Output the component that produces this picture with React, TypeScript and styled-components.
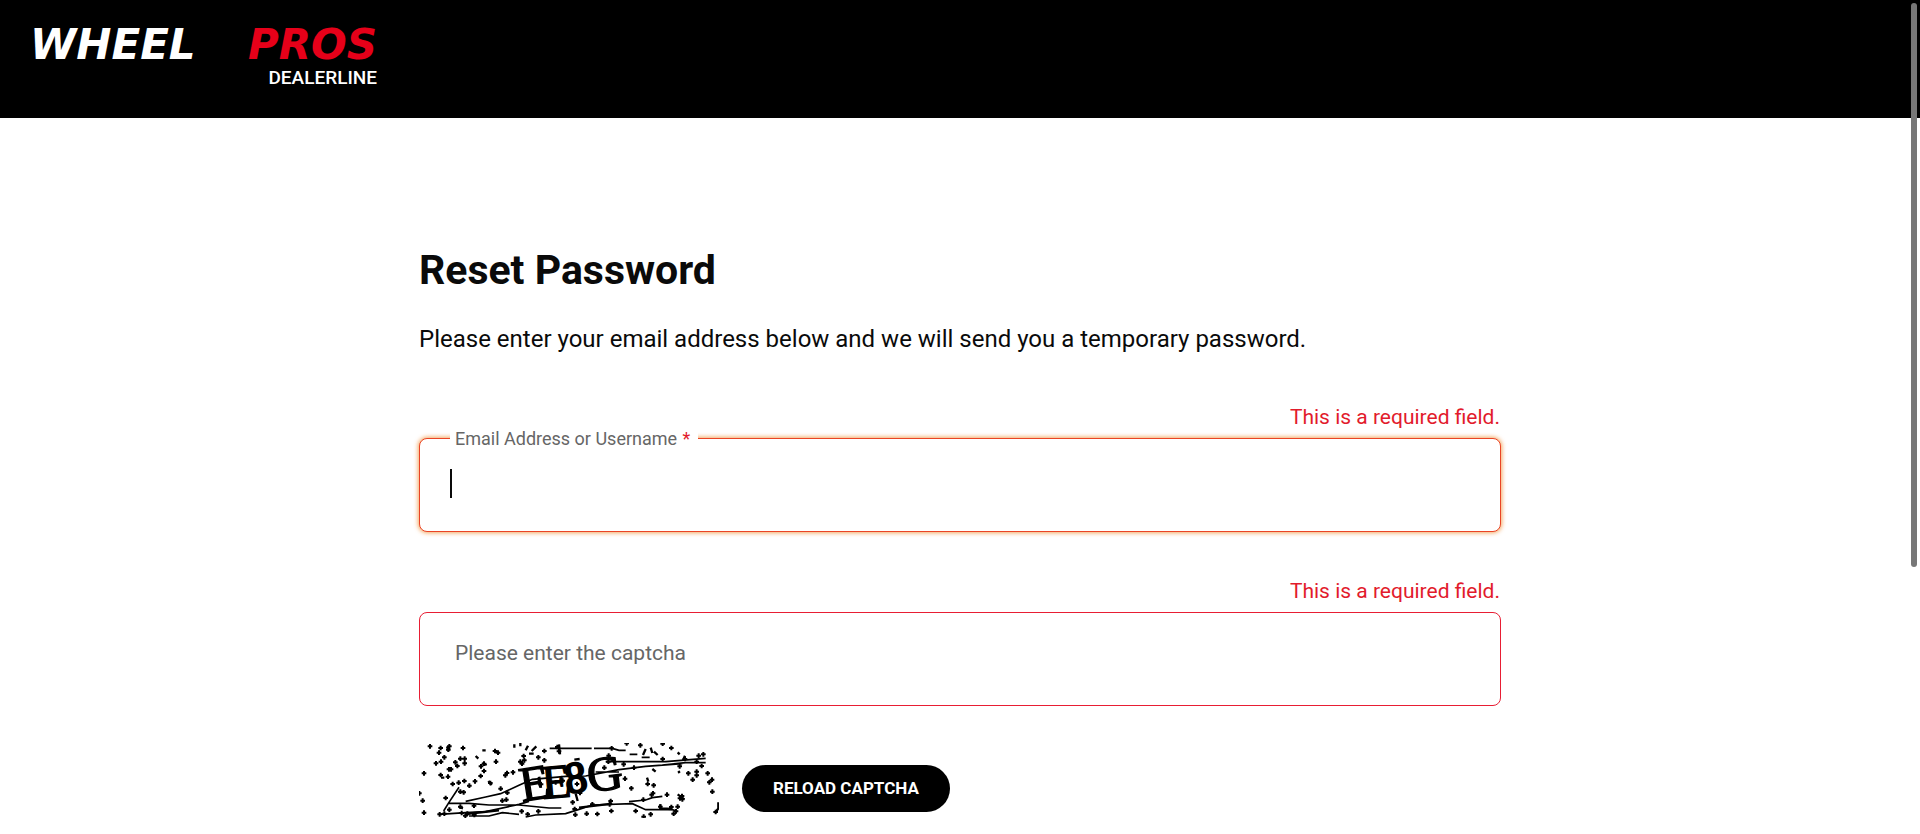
import React from "react";
import styled, { createGlobalStyle } from "styled-components";

const GlobalStyle = createGlobalStyle`
  *, *::before, *::after { box-sizing: border-box; }
  body {
    margin: 0;
    background: #fff;
    color: #0a0a0a;
    font-family: Roboto, "Liberation Sans", sans-serif;
  }
`;

const Header = styled.header`
  display: flex;
  background: #000;
  padding: 29px 30px 28px;
`;

const LogoLink = styled.a`
  display: flex;
  flex-direction: column;
  align-items: flex-end;
  gap: 5px;
  width: 347px;
  color: #fff;
  text-decoration: none;
`;

const Wordmark = styled.span`
  display: flex;
  justify-content: space-between;
  align-self: stretch;
  font: italic 700 42px/32px "DejaVu Sans", sans-serif;
`;

const WordmarkAccent = styled.span`
  color: #e60019;
`;

const Tagline = styled.span`
  font-size: 19px;
  font-weight: 500;
  line-height: 24px;
`;

const Main = styled.main`
  max-width: 1082px;
  margin: 0 auto;
  padding-top: 128px;
`;

const Title = styled.h1`
  margin: 0;
  font-size: 41px;
  font-weight: 700;
  line-height: 48px;
`;

const Intro = styled.p`
  margin: 29px 0 50px;
  font-size: 24px;
  line-height: 32px;
`;

const Form = styled.form`
  display: flex;
  flex-direction: column;
  gap: 47px;
`;

const Field = styled.div`
  display: flex;
  flex-direction: column;
  gap: 9px;
`;

const FieldError = styled.div`
  padding-right: 1px;
  color: #e21b2c;
  font-size: 21px;
  line-height: 24px;
  text-align: right;
`;

const Control = styled.div`
  position: relative;
  display: flex;
`;

const TextInput = styled.input<{ $active?: boolean }>`
  width: 100%;
  height: 94px;
  padding: 0 30px;
  border: 1px solid ${(p) => (p.$active ? "#ea4425" : "#e81e34")};
  border-radius: 8px;
  outline: none;
  background: #fff;
  box-shadow: ${(p) => (p.$active ? "0 0 4px 1px rgba(240, 130, 30, 0.7)" : "none")};
  color: inherit;
  font: 400 21px/24px Roboto, sans-serif;
  caret-color: transparent;
`;

const Label = styled.label<{ $floating?: boolean }>`
  position: absolute;
  left: 31px;
  top: ${(p) => (p.$floating ? "-11px" : "29px")};
  padding: 0 5px;
  background: #fff;
  color: #666;
  font-size: ${(p) => (p.$floating ? "18px" : "21px")};
  line-height: 24px;
`;

const RequiredMark = styled.span`
  margin: 0 3px 0 1px;
  color: #e21b2c;
`;

const Caret = styled.span`
  position: absolute;
  left: 31px;
  top: 31px;
  width: 2px;
  height: 29px;
  background: #0a0a0a;
`;

const CaptchaRow = styled.div`
  display: flex;
  align-items: flex-end;
  gap: 23px;
  margin-top: -10px;
`;

const CaptchaImage = styled.svg`
  display: block;
  width: 300px;
  height: 75px;
`;

const ReloadButton = styled.button`
  height: 47px;
  margin-bottom: 6px;
  padding: 0 31px 2px;
  border: 0;
  border-radius: 24px;
  background: #000;
  color: #fff;
  font: 700 17px/24px Roboto, sans-serif;
  text-transform: uppercase;
`;

const ScrollThumb = styled.div`
  position: fixed;
  top: 3px;
  right: 3px;
  width: 6px;
  height: 564px;
  border-radius: 3px;
  background: #777;
`;

/* Noise speckles, in thirds of a pixel. */
const SPECKLES: [number, number][] = [
  [33, 16], [65, 21], [91, 16], [88, 26], [60, 35], [132, 21], [76, 49], [51, 67], [66, 62], [124, 53],
  [137, 53], [109, 64], [115, 75], [137, 67], [90, 85], [96, 85], [15, 97], [65, 102], [87, 107], [231, 62],
  [195, 68], [186, 76], [195, 90], [185, 105], [228, 30], [237, 35], [282, 94], [264, 96], [259, 103], [214, 126],
  [101, 129], [119, 125], [136, 120], [151, 134], [168, 121], [124, 152], [134, 154], [80, 171], [11, 179], [1, 157],
  [15, 215], [91, 206], [62, 220], [76, 218], [124, 197], [128, 216], [145, 218], [165, 194], [166, 222], [245, 143],
  [250, 179], [262, 176], [265, 155], [139, 224],
  [376, 30], [358, 49], [314, 45], [316, 58], [304, 62], [309, 68], [376, 58], [420, 31], [415, 18], [578, 22],
  [569, 44], [556, 80], [568, 62], [474, 129], [366, 130], [410, 124], [431, 119], [461, 184], [483, 156], [308, 211],
  [358, 211], [467, 204], [503, 218], [535, 219], [469, 221], [575, 180], [572, 190], [577, 210], [520, 190], [326, 220],
  [623, 7], [664, 13], [731, 8], [757, 21], [614, 70], [645, 80], [731, 54], [798, 54], [782, 76], [833, 62],
  [839, 44], [853, 40], [848, 75], [833, 92], [833, 103], [808, 97], [821, 116], [866, 97], [879, 116], [871, 124],
  [880, 152], [637, 142], [618, 113], [686, 129], [704, 133], [702, 157], [744, 161], [673, 176], [698, 161], [650, 210],
  [695, 220], [674, 227], [783, 172], [789, 165], [790, 175], [757, 198], [776, 197], [771, 211], [764, 218], [724, 197],
  [890, 213],
];

const speckPath = SPECKLES.map(([x, y]) => `M${x - 7} ${y}h14M${x} ${y - 7}v14`).join("");

function Captcha() {
  return (
    <CaptchaImage viewBox="0 6 900 225" role="img" aria-label="Captcha">
      <g fill="none" stroke="#000">
        <path d={speckPath} strokeWidth="6" />
        <path
          strokeWidth="5"
          d="M120 139L88 187L74 210M88 187H150L210 192H300L390 201H427
             M140 181L200 168L245 158L300 133L340 115L440 106L500 105L600 86L680 76L790 68
             M60 220L140 215L200 212L300 190L330 181M150 225H210L250 215L300 220
             M392 22H518M525 22H580L600 28H620M632 40H655M668 49H692M530 93H600M560 62H740L860 52
             M730 72L800 65H860M320 228L350 222L440 218L480 205L520 192L640 188L680 206L760 206L772 210
             M630 182L680 177L700 170L730 166"
        />
        <path
          strokeWidth="7"
          d="M286 10V20M304 6V16M327 14L320 28M352 16L338 30M84 16L89 30M170 45L178 53M190 28H200
             M190 66L203 72M208 120L218 132M680 24L672 42M695 20L700 36M705 32L716 42
             M798 44L792 58M66 110H76M684 110L688 122M700 84L710 92M776 34L782 40M782 96L778 90
             M898 184V202L888 216M466 56L482 54M470 158L476 180M330 38H344M420 10L423 40
             M724 190V202L760 204M776 160L796 175M120 198L132 202M140 219L240 208M480 200L580 188"
        />
      </g>
      <g fill="#000" stroke="#000" fontFamily="Liberation Serif, serif">
        <text x="310" y="182" strokeWidth="4" fontSize="148" transform="rotate(-9 310 182)">E</text>
        <text x="372" y="174" strokeWidth="4" fontSize="144" transform="rotate(-5 372 174)">E</text>
        <text x="444" y="158" strokeWidth="7" fontSize="132" transform="rotate(-9 444 158)">8</text>
        <text x="510" y="154" strokeWidth="4" fontSize="148" transform="rotate(-7 510 154)">G</text>
      </g>
    </CaptchaImage>
  );
}

export default function App() {
  return (
    <>
      <GlobalStyle />
      <Header>
        <LogoLink href="#" aria-label="Wheel Pros Dealerline">
          <Wordmark>
            <span>WHEEL</span>
            <WordmarkAccent>PROS</WordmarkAccent>
          </Wordmark>
          <Tagline>DEALERLINE</Tagline>
        </LogoLink>
      </Header>
      <Main>
        <Title>Reset Password</Title>
        <Intro>Please enter your email address below and we will send you a temporary password.</Intro>
        <Form noValidate>
          <Field>
            <FieldError id="email-error">This is a required field.</FieldError>
            <Control>
              <TextInput id="email" type="email" $active aria-invalid aria-describedby="email-error" />
              <Label htmlFor="email" $floating>
                Email Address or Username <RequiredMark>*</RequiredMark>
              </Label>
              <Caret />
            </Control>
          </Field>
          <Field>
            <FieldError id="captcha-error">This is a required field.</FieldError>
            <Control>
              <TextInput id="captcha" type="text" aria-invalid aria-describedby="captcha-error" />
              <Label htmlFor="captcha">Please enter the captcha</Label>
            </Control>
          </Field>
          <CaptchaRow>
            <Captcha />
            <ReloadButton type="button">Reload captcha</ReloadButton>
          </CaptchaRow>
        </Form>
      </Main>
      <ScrollThumb />
    </>
  );
}
